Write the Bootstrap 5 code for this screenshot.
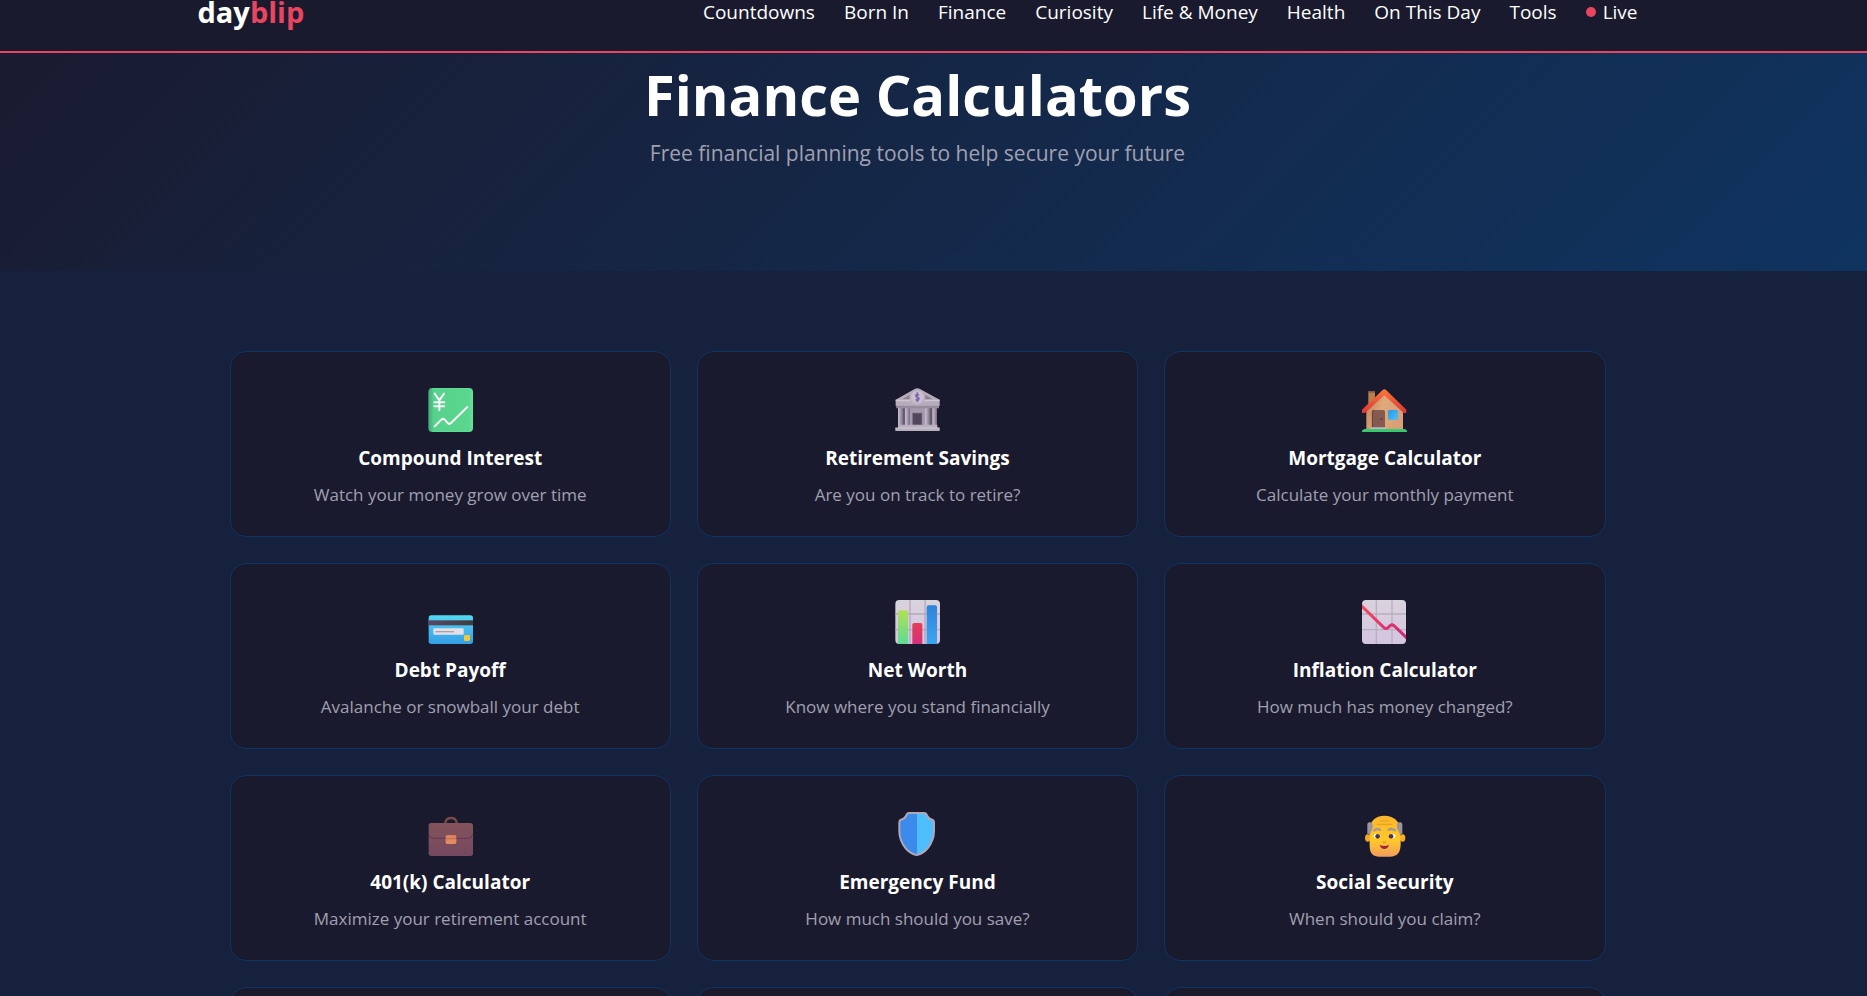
<!DOCTYPE html>
<html lang="en">
<head>
<meta charset="utf-8">
<meta name="viewport" content="width=device-width, initial-scale=1">
<title>Finance Calculators - dayblip</title>
<link href="https://cdn.jsdelivr.net/npm/bootstrap@5.3.0/dist/css/bootstrap.min.css" rel="stylesheet">
<style>
  body { font-family: "Open Sans", "Noto Sans", sans-serif; background: #16213e; color: #fff; height: 100vh; }
  a { color: inherit; text-decoration: none; }
  .shell { max-width: 1440px; }
  .page-gutter { padding-right: 32px; }
  .site-head { background: #1a1a2e; border-bottom: 2px solid #e94560; padding-bottom: 27px; z-index: 2; }
  .bar { height: 24px; }
  .brand { font-size: 29px; line-height: 24px; font-weight: 700; }
  .brand span { color: #e94560; }
  .menu { gap: 29px; font-size: 19px; line-height: 24px; }
  .live-dot { width: 10px; height: 10px; background: #e94560; margin-right: 7px; }
  .hero { background: linear-gradient(135deg, #1a1a2e 0%, #0f3460 100%); margin-top: -80px; padding-top: 87px; padding-bottom: 100px; }
  .hero h1 { font-size: 56px; line-height: 68px; font-weight: 700; margin-bottom: 8px; }
  .hero p { font-size: 21px; line-height: 35px; color: #a0a0b0; }
  .tools { padding: 80px 32px 0; }
  .tool-grid { display: grid; grid-template-columns: repeat(3, 1fr); gap: 26px; }
  .tool { --bs-card-bg: #1a1a2e; --bs-card-color: #fff; --bs-card-border-color: #0f3460; --bs-card-border-radius: 16px; height: 186px; padding-top: 36px; }
  .tool svg { width: 45px; height: 45px; margin-bottom: 11px; }
  .tool h2 { font-size: 19px; line-height: 28px; font-weight: 700; margin-bottom: 10px; }
  .tool p { font-size: 17px; line-height: 26px; color: #a0a0b0; }
</style>
</head>
<body class="d-flex flex-column overflow-hidden">
<header class="site-head position-relative page-gutter">
  <nav class="shell bar mx-auto d-flex justify-content-between align-items-center">
    <a class="brand" href="#">day<span>blip</span></a>
    <div class="menu d-flex">
      <a href="#">Countdowns</a><a href="#">Born In</a><a href="#">Finance</a><a href="#">Curiosity</a><a href="#">Life &amp; Money</a><a href="#">Health</a><a href="#">On This Day</a><a href="#">Tools</a>
      <a href="#" class="d-flex align-items-center"><span class="live-dot rounded-circle"></span>Live</a>
    </div>
  </nav>
</header>
<section class="hero text-center page-gutter">
  <h1>Finance Calculators</h1>
  <p class="mb-0">Free financial planning tools to help secure your future</p>
</section>
<main class="page-gutter">
  <div class="shell tools mx-auto">
    <div class="tool-grid">
      <a href="#" class="card tool align-items-center text-center">
        <svg viewBox="54 54 135 135" aria-hidden="true">
          <defs><linearGradient id="gr" x2="1"><stop stop-color="#3fa877"/><stop offset=".12" stop-color="#57d28c"/><stop offset=".9" stop-color="#5bd68e"/><stop offset="1" stop-color="#64e598"/></linearGradient></defs>
          <rect x="55" y="54" width="134" height="132" rx="12" fill="url(#gr)"/>
          <path d="M66 56H180M66 184H180" stroke="#66e79a" stroke-width="3" opacity=".5"/>
          <path d="M74 71 88 91 102 71M88 91V121M73 97H103M73 109H103M74 169 94 149Q99 144 104 149L113 159Q118 164 123 159L172 111" fill="none" stroke="#f7f4fa" stroke-width="6" stroke-linecap="round" stroke-linejoin="round"/>
        </svg>
        <h2>Compound Interest</h2><p class="mb-0">Watch your money grow over time</p>
      </a>
      <a href="#" class="card tool align-items-center text-center">
        <svg viewBox="54 54 135 135" aria-hidden="true">
          <defs><linearGradient id="col" x2="1"><stop stop-color="#c9c0cf"/><stop offset=".45" stop-color="#aaa0b3"/><stop offset="1" stop-color="#786b82"/></linearGradient></defs>
          <rect x="64" y="112" width="116" height="55" fill="#665a70"/>
          <rect x="90" y="114" width="63" height="53" fill="#a59bad"/>
          <rect x="106" y="129" width="29" height="38" fill="#51475c" stroke="#867b90" stroke-width="2"/>
          <g fill="url(#col)"><rect x="63" y="114" width="15" height="53"/><rect x="84" y="114" width="15" height="53"/><rect x="144" y="114" width="15" height="53"/><rect x="166" y="114" width="14" height="53"/></g>
          <path d="M56 89 113 57Q121 52 129 57L188 89V108H56Z" fill="#b6acbb"/>
          <path d="M76 88 103 72V88ZM167 88 140 72V88Z" fill="#8b8192"/>
          <path d="M56 89H188V94H56Z" fill="#d0c7d3"/><path d="M58 107H186V115H58Z" fill="#988d9f"/>
          <circle cx="121" cy="82" r="24" fill="#b9afc0"/><circle cx="121" cy="82" r="19" fill="#c9c0ce"/>
          <path d="M121 67V97M126 76Q121 70 117 75Q115 80 121 82Q128 84 125 89Q121 93 116 88" fill="none" stroke="#8468b0" stroke-width="5"/>
          <path d="M63 164H181V174H188V183H55V174H63Z" fill="#b9afbe"/><path d="M55 174H188" stroke="#d4cbd7" stroke-width="3"/>
        </svg>
        <h2>Retirement Savings</h2><p class="mb-0">Are you on track to retire?</p>
      </a>
      <a href="#" class="card tool align-items-center text-center">
        <svg viewBox="54 54 135 135" aria-hidden="true">
          <defs><linearGradient id="wall" x2="1" y2=".3"><stop stop-color="#bd8154"/><stop offset=".5" stop-color="#dfaa7c"/><stop offset="1" stop-color="#d9a078"/></linearGradient><linearGradient id="roof" y2="1" x2="0"><stop stop-color="#fa7937"/><stop offset="1" stop-color="#df3437"/></linearGradient><linearGradient id="pane" x2="1" y2="1"><stop stop-color="#2998e4"/><stop offset="1" stop-color="#4bc1fb"/></linearGradient></defs>
          <rect x="73" y="64" width="20" height="50" fill="#b98149"/><rect x="73" y="63" width="20" height="5" fill="#865b3f"/>
          <path d="M67 110 121 66 177 112V178H67Z" fill="url(#wall)"/>
          <path d="M54 119 115 61Q121 55 127 61L187 119V129H179L121 76 63 129H54Z" fill="url(#roof)"/>
          <rect x="84" y="120" width="39" height="55" rx="5" fill="#845a51"/><path d="M85 173V125Q85 121 90 121" stroke="#633f43" stroke-width="3" fill="none"/><circle cx="112" cy="147" r="3" fill="#603c3b"/>
          <rect x="132" y="120" width="30" height="29" rx="3" fill="url(#pane)"/>
          <path d="M60 177H183L189 182V186H54V182Z" fill="#36ca70"/><path d="M83 172H124L127 177H79Z" fill="#c4b6c6"/>
        </svg>
        <h2>Mortgage Calculator</h2><p class="mb-0">Calculate your monthly payment</p>
      </a>
      <a href="#" class="card tool align-items-center text-center">
        <svg viewBox="54 45 135 135" aria-hidden="true">
          <defs><linearGradient id="cc" x2="0" y2="1"><stop stop-color="#52d9f1"/><stop offset=".5" stop-color="#45b9ee"/><stop offset="1" stop-color="#359ee6"/></linearGradient><linearGradient id="mag" x2="1"><stop stop-color="#5a4669"/><stop offset="1" stop-color="#403d3e"/></linearGradient></defs>
          <rect x="56" y="91" width="133" height="86" rx="8" fill="url(#cc)"/><rect x="56" y="106" width="133" height="15" fill="url(#mag)"/>
          <rect x="70" y="130" width="91" height="19" rx="2" fill="#e2dfe6"/><path d="M76 140H132" stroke="#aaa3ae" stroke-width="4"/>
          <rect x="162" y="150" width="18" height="18" rx="4" fill="#f2c934"/>
        </svg>
        <h2>Debt Payoff</h2><p class="mb-0">Avalanche or snowball your debt</p>
      </a>
      <a href="#" class="card tool align-items-center text-center">
        <svg viewBox="54 45 135 135" aria-hidden="true">
          <defs><linearGradient id="pap" x2="0" y2="1"><stop stop-color="#d9d3dd"/><stop offset="1" stop-color="#d3c5e0"/></linearGradient><linearGradient id="b1" x2="0" y2="1"><stop stop-color="#b1df56"/><stop offset="1" stop-color="#5ddc93"/></linearGradient><linearGradient id="b2" x2="0" y2="1"><stop stop-color="#e63f58"/><stop offset="1" stop-color="#d42f79"/></linearGradient><linearGradient id="b3" x2="0" y2="1"><stop stop-color="#2f82dc"/><stop offset="1" stop-color="#3ca5f1"/></linearGradient></defs>
          <rect x="55" y="45" width="134" height="132" rx="12" fill="url(#pap)"/>
          <path d="M55 87H189M55 134H189M99 45V177M144 45V177" stroke="#b4a9bb" stroke-width="4"/>
          <path d="M63 177V81Q63 76 69 76H87Q93 76 93 81V177Z" fill="url(#b1)"/>
          <path d="M106 177V119Q106 114 112 114H130Q136 114 136 119V177Z" fill="url(#b2)"/>
          <path d="M149 177V66Q149 61 155 61H174Q180 61 180 66V177Z" fill="url(#b3)"/>
        </svg>
        <h2>Net Worth</h2><p class="mb-0">Know where you stand financially</p>
      </a>
      <a href="#" class="card tool align-items-center text-center">
        <svg viewBox="54 45 135 135" aria-hidden="true">
          <defs><linearGradient id="dn" x2="1" y2="1"><stop stop-color="#f9495a"/><stop offset="1" stop-color="#c9287d"/></linearGradient><clipPath id="sheet"><rect x="54" y="45" width="132" height="132" rx="12"/></clipPath></defs>
          <g clip-path="url(#sheet)"><rect x="54" y="45" width="132" height="132" fill="url(#pap)"/>
          <path d="M54 87H186M54 134H186M97 45V177M144 45V177" stroke="#b9afc1" stroke-width="4"/>
          <path d="M50 60 119 127Q126 134 133 127L138 122Q144 117 150 122L190 160" fill="none" stroke="url(#dn)" stroke-width="9"/></g>
        </svg>
        <h2>Inflation Calculator</h2><p class="mb-0">How much has money changed?</p>
      </a>
      <a href="#" class="card tool align-items-center text-center">
        <svg viewBox="54 36 135 135" aria-hidden="true">
          <defs><linearGradient id="bag" x2="0" y2="1"><stop stop-color="#83535a"/><stop offset="1" stop-color="#754860"/></linearGradient><linearGradient id="clasp" x2="0" y2="1"><stop stop-color="#d88062"/><stop offset="1" stop-color="#e4925e"/></linearGradient></defs>
          <path d="M106 72V68Q108 54 123 54Q138 54 140 68V72" fill="none" stroke="#754a45" stroke-width="7"/>
          <rect x="56" y="69" width="133" height="99" rx="8" fill="url(#bag)"/>
          <path d="M57 103Q59 115 72 115H173Q186 115 188 103" fill="none" stroke="#683650" stroke-width="3"/>
          <rect x="107" y="105" width="32" height="27" rx="5" fill="url(#clasp)"/><path d="M108 116H138" stroke="#b9604f" stroke-width="2"/>
        </svg>
        <h2>401(k) Calculator</h2><p class="mb-0">Maximize your retirement account</p>
      </a>
      <a href="#" class="card tool align-items-center text-center">
        <svg viewBox="54 36 135 135" aria-hidden="true">
          <defs><linearGradient id="shield" x2="1"><stop offset=".5" stop-color="#3b8bec"/><stop offset=".5" stop-color="#4fbefd"/></linearGradient></defs>
          <path d="M96 39H142Q147 39 149 44Q153 56 166 59Q171 61 171 67V94Q171 121 152 145Q137 162 119 165Q101 162 86 145Q67 121 67 94V67Q67 61 72 59Q85 56 89 44Q91 39 96 39Z" fill="url(#shield)" stroke="#b0a6b8" stroke-width="6"/>
        </svg>
        <h2>Emergency Fund</h2><p class="mb-0">How much should you save?</p>
      </a>
      <a href="#" class="card tool align-items-center text-center">
        <svg viewBox="54 36 135 135" aria-hidden="true">
          <defs><linearGradient id="face" x2="0" y2="1"><stop stop-color="#f9b62c"/><stop offset=".6" stop-color="#ffc928"/><stop offset="1" stop-color="#f09c5c"/></linearGradient></defs>
          <ellipse cx="71" cy="114" rx="8" ry="11" fill="#f4a52e"/><ellipse cx="176" cy="114" rx="8" ry="11" fill="#f5ad2d"/>
          <path d="M76 91Q80 48 121 47Q164 48 170 91V132Q170 170 138 170H106Q77 170 77 137Z" fill="url(#face)"/>
          <path d="M108 63H134M99 73H144" stroke="#e79b20" stroke-width="3" stroke-linecap="round"/>
          <path d="M70 102V74Q70 65 79 67Q89 69 86 84L79 101ZM175 102V74Q175 65 166 67Q156 69 159 84L167 101Z" fill="#9d949e"/>
          <path d="M91 91Q98 84 108 89M134 89Q145 84 153 91" fill="none" stroke="#a69a91" stroke-width="7" stroke-linecap="round"/>
          <ellipse cx="99" cy="108" rx="10" ry="7" fill="#fff"/><ellipse cx="144" cy="108" rx="10" ry="7" fill="#fff"/>
          <circle cx="101" cy="109" r="7" fill="#513247"/><circle cx="141" cy="109" r="7" fill="#513247"/>
          <path d="M117 125Q121 131 126 125" fill="none" stroke="#ee9422" stroke-width="4"/><path d="M107 135Q121 141 135 135Q131 147 121 147Q111 147 107 135Z" fill="#a02142"/>
        </svg>
        <h2>Social Security</h2><p class="mb-0">When should you claim?</p>
      </a>
      <div class="card tool"></div><div class="card tool"></div><div class="card tool"></div>
    </div>
  </div>
</main>
<script src="https://cdn.jsdelivr.net/npm/bootstrap@5.3.0/dist/js/bootstrap.bundle.min.js"></script>
</body>
</html>
